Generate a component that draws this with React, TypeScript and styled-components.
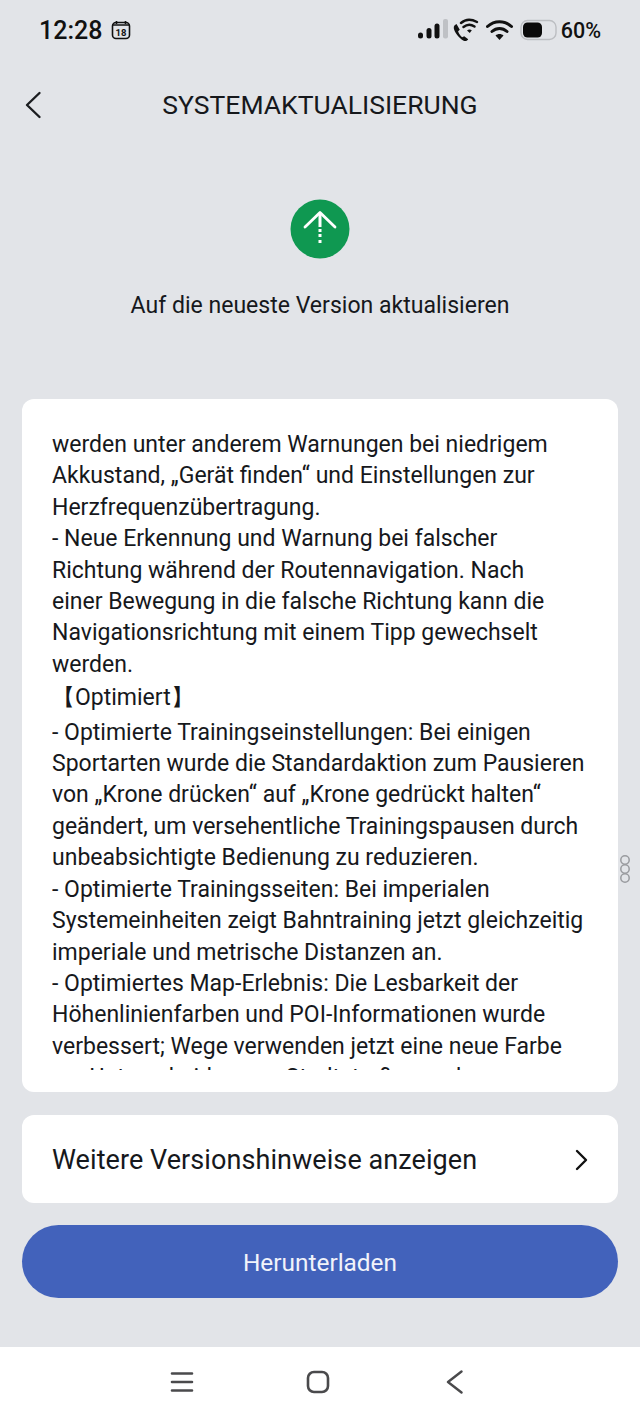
import React, {FC} from 'react'
import styled, {createGlobalStyle} from 'styled-components'

const GlobalStyle = createGlobalStyle`
  html, body {
    margin: 0;
    padding: 0;
    background: #e2e4e8;
    font-family: Roboto, "Liberation Sans", sans-serif;
  }
`

const NOTES = [
    'werden unter anderem Warnungen bei niedrigem',
    'Akkustand, „Gerät finden“ und Einstellungen zur',
    'Herzfrequenzübertragung.',
    '- Neue Erkennung und Warnung bei falscher',
    'Richtung während der Routennavigation. Nach',
    'einer Bewegung in die falsche Richtung kann die',
    'Navigationsrichtung mit einem Tipp gewechselt',
    'werden.',
    '【Optimiert】',
    '- Optimierte Trainingseinstellungen: Bei einigen',
    'Sportarten wurde die Standardaktion zum Pausieren',
    'von „Krone drücken“ auf „Krone gedrückt halten“',
    'geändert, um versehentliche Trainingspausen durch',
    'unbeabsichtigte Bedienung zu reduzieren.',
    '- Optimierte Trainingsseiten: Bei imperialen',
    'Systemeinheiten zeigt Bahntraining jetzt gleichzeitig',
    'imperiale und metrische Distanzen an.',
    '- Optimiertes Map-Erlebnis: Die Lesbarkeit der',
    'Höhenlinienfarben und POI-Informationen wurde',
    'verbessert; Wege verwenden jetzt eine neue Farbe',
    'zur Unterscheidung zu Stadtstraßen mehr',
]

const Page = styled.div`
  width: 640px;
  height: 1422px;
  display: flex;
  flex-direction: column;
  position: relative;
  overflow: hidden;
  background: #e2e4e8;
  color: #16181c;
`

const StatusBar = styled.div`
  height: 60px;
  padding: 0 39px;
  display: flex;
  align-items: center;
  justify-content: space-between;
`

const StatusGroup = styled.div<{ $gap: number }>`
  display: flex;
  align-items: center;
  gap: ${(p) => p.$gap}px;
`

const Clock = styled.span`
  font-size: 25px;
  font-weight: 500;
  color: #111;
`

const BatteryText = styled.span`
  font-size: 21.5px;
  font-weight: 500;
  color: #111;
`

const Header = styled.div`
  height: 90px;
  padding-left: 24px;
  display: flex;
  align-items: center;
  position: relative;
`

const Title = styled.h1`
  position: absolute;
  left: 0;
  right: 0;
  margin: -2px 0 0;
  text-align: center;
  font-size: 26.5px;
  font-weight: 400;
  color: #16181c;
`

const Hero = styled.div`
  height: 249px;
  padding-top: 49px;
  box-sizing: border-box;
  display: flex;
  flex-direction: column;
  align-items: center;
`

const Subtitle = styled.div`
  margin-top: 32px;
  font-size: 23.05px;
  line-height: 30px;
`

const Content = styled.div`
  padding: 0 22px;
  display: flex;
  flex-direction: column;
`

const NotesCard = styled.div`
  height: 693px;
  box-sizing: border-box;
  padding: 30px 30px 22px;
  background: #fff;
  border-radius: 12px;
`

const NotesScroll = styled.div`
  height: 641px;
  overflow: hidden;
  font-size: 23px;
  line-height: 31.4px;
  white-space: nowrap;
`

const NoteLine = styled.div<{ $heading?: boolean }>`
  line-height: ${(p) => (p.$heading ? '36.4px' : 'inherit')};
`

const MoreRow = styled.div`
  margin-top: 23px;
  height: 88px;
  padding: 1px 30px 0;
  box-sizing: border-box;
  display: flex;
  align-items: center;
  justify-content: space-between;
  background: #fff;
  border-radius: 12px;
  font-size: 27px;
  letter-spacing: 0.07px;
`

const DownloadButton = styled.button`
  margin-top: 22px;
  height: 73px;
  padding: 1px 0 0;
  border: none;
  border-radius: 37px;
  background: #4262bb;
  color: #f1f3fa;
  font-family: inherit;
  font-size: 24.4px;
`

const NavBar = styled.div`
  position: absolute;
  left: 0;
  right: 0;
  bottom: 0;
  height: 75px;
  padding: 0 0 6px 170px;
  box-sizing: border-box;
  background: #fff;
  display: flex;
  align-items: center;
  gap: 112px;
`

const ScrollHandle = styled.svg`
  position: absolute;
  right: 9px;
  top: 854px;
`

const Calendar: FC = () => (
    <svg width="20" height="20" viewBox="0 0 20 20" fill="none" stroke="#111" strokeWidth="1.6">
        <rect x="1.5" y="2.5" width="17" height="16" rx="3.5"/>
        <path d="M5.5 1v3M14.5 1v3M1.5 5h17"/>
        <text x="10" y="15.6" fontSize="9.5" fontWeight="700" textAnchor="middle" fill="#111" stroke="none"
              fontFamily="Roboto, sans-serif">18</text>
    </svg>
)

const Signal: FC = () => (
    <svg width="30" height="24" viewBox="0 0 30 24">
        <rect x="0" y="14.5" width="5" height="6" rx="2.5" fill="#111"/>
        <rect x="8.5" y="10" width="5" height="10.5" rx="2.5" fill="#111"/>
        <rect x="16.5" y="5.5" width="5" height="15" rx="2.5" fill="#111"/>
        <rect x="25" y="1" width="5" height="19.5" rx="2" fill="#bfc1c5"/>
    </svg>
)

const WifiCall: FC = () => (
    <svg width="30" height="24" viewBox="0 0 30 24" fill="none">
        <path d="M4.5 6c-1.6.8-3 2-2.700 4.200.5 4 5.200 10 9.900 12.500 1.800.9 3.600.2 4.500-1.400l-4-3-2.100 1c-1.800-1.600-3.300-3.800-4-6l1.700-1.500z"
              fill="#111"/>
        <path d="M9 5C13.500 1 19.500 1 25 4M11.500 9c3.500-2.800 7.500-2.800 11-.5" stroke="#111" strokeWidth="2.400"
              strokeLinecap="round"/>
        <path d="M15 12.500c1.500-1.300 3.500-1.300 4.800-.2l-2 2.700z" fill="#111"/>
    </svg>
)

const Wifi: FC = () => (
    <svg width="30" height="22" viewBox="0 0 30 22" fill="none">
        <path d="M1.500 7.500C8.500 1 18.500 1 25.500 7.500M6 12.500c4.500-4 10.500-4 15 0" stroke="#111" strokeWidth="3"
              strokeLinecap="round"/>
        <path d="M9.500 16.500c2.300-2 5.700-2 8 0l-4 4.500z" fill="#111"/>
    </svg>
)

const Battery: FC = () => (
    <svg width="37" height="22" viewBox="0 0 37 22">
        <rect x="1" y="1.500" width="35" height="19" rx="6.500" fill="none" stroke="#bcbec2" strokeWidth="1.400"/>
        <rect x="3" y="3.500" width="19" height="15" rx="4.500" fill="#0a0a0a"/>
    </svg>
)

const App: FC = () => (
    <Page>
        <GlobalStyle/>
        <StatusBar>
            <StatusGroup $gap={9}>
                <Clock>12:28</Clock>
                <Calendar/>
            </StatusGroup>
            <StatusGroup $gap={4}>
                <Signal/>
                <WifiCall/>
                <Wifi/>
                <Battery/>
                <BatteryText>60%</BatteryText>
            </StatusGroup>
        </StatusBar>
        <Header>
            <svg width="18" height="30" viewBox="0 0 18 30" fill="none" stroke="#1b1d20" strokeWidth="2.400"
                 strokeLinecap="round" strokeLinejoin="round">
                <path d="M15.500 3 3 15l12.500 12"/>
            </svg>
            <Title>SYSTEMAKTUALISIERUNG</Title>
        </Header>
        <Hero>
            <svg width="60" height="60" viewBox="0 0 60 60">
                <circle cx="30" cy="30" r="29.500" fill="#0f9851"/>
                <path d="M15 28 30 13.500 45 28" fill="none" stroke="#fff" strokeWidth="2.800" strokeLinecap="round"
                      strokeLinejoin="round"/>
                <path d="M30 14v14M30 30v3M30 35v3M30 41v3" stroke="#fff" strokeWidth="3"/>
            </svg>
            <Subtitle>Auf die neueste Version aktualisieren</Subtitle>
        </Hero>
        <Content>
            <NotesCard>
                <NotesScroll>
                    {NOTES.map((line) => (
                        <NoteLine key={line} $heading={line.startsWith('【')}>{line}</NoteLine>
                    ))}
                </NotesScroll>
            </NotesCard>
            <MoreRow>
                Weitere Versionshinweise anzeigen
                <svg width="14" height="22" viewBox="0 0 14 22" fill="none" stroke="#111" strokeWidth="2.400"
                     strokeLinecap="round" strokeLinejoin="round">
                    <path d="M3 2l9 9-9 9"/>
                </svg>
            </MoreRow>
            <DownloadButton>Herunterladen</DownloadButton>
        </Content>
        <ScrollHandle width="12" height="30" viewBox="0 0 12 30" fill="none" stroke="#999b9f" strokeWidth="1.500">
            <circle cx="6" cy="6" r="4.200"/>
            <circle cx="6" cy="15" r="4.200"/>
            <circle cx="6" cy="24" r="4.200"/>
        </ScrollHandle>
        <NavBar>
            <svg width="24" height="22" viewBox="0 0 24 22" fill="none" stroke="#4a4a4c" strokeWidth="2.600"
                 strokeLinecap="round">
                <path d="M2 2.500h20M2 11h20M2 19.500h20"/>
            </svg>
            <svg width="24" height="24" viewBox="0 0 24 24" fill="none" stroke="#4a4a4c" strokeWidth="2.600">
                <rect x="2" y="2" width="20" height="20" rx="6"/>
            </svg>
            <svg width="22" height="24" viewBox="0 0 22 24" fill="none" stroke="#4a4a4c" strokeWidth="2.400"
                 strokeLinecap="round" strokeLinejoin="round">
                <path d="M19.500 1.500 6 12l13.500 10.500"/>
            </svg>
        </NavBar>
    </Page>
)

export default App
